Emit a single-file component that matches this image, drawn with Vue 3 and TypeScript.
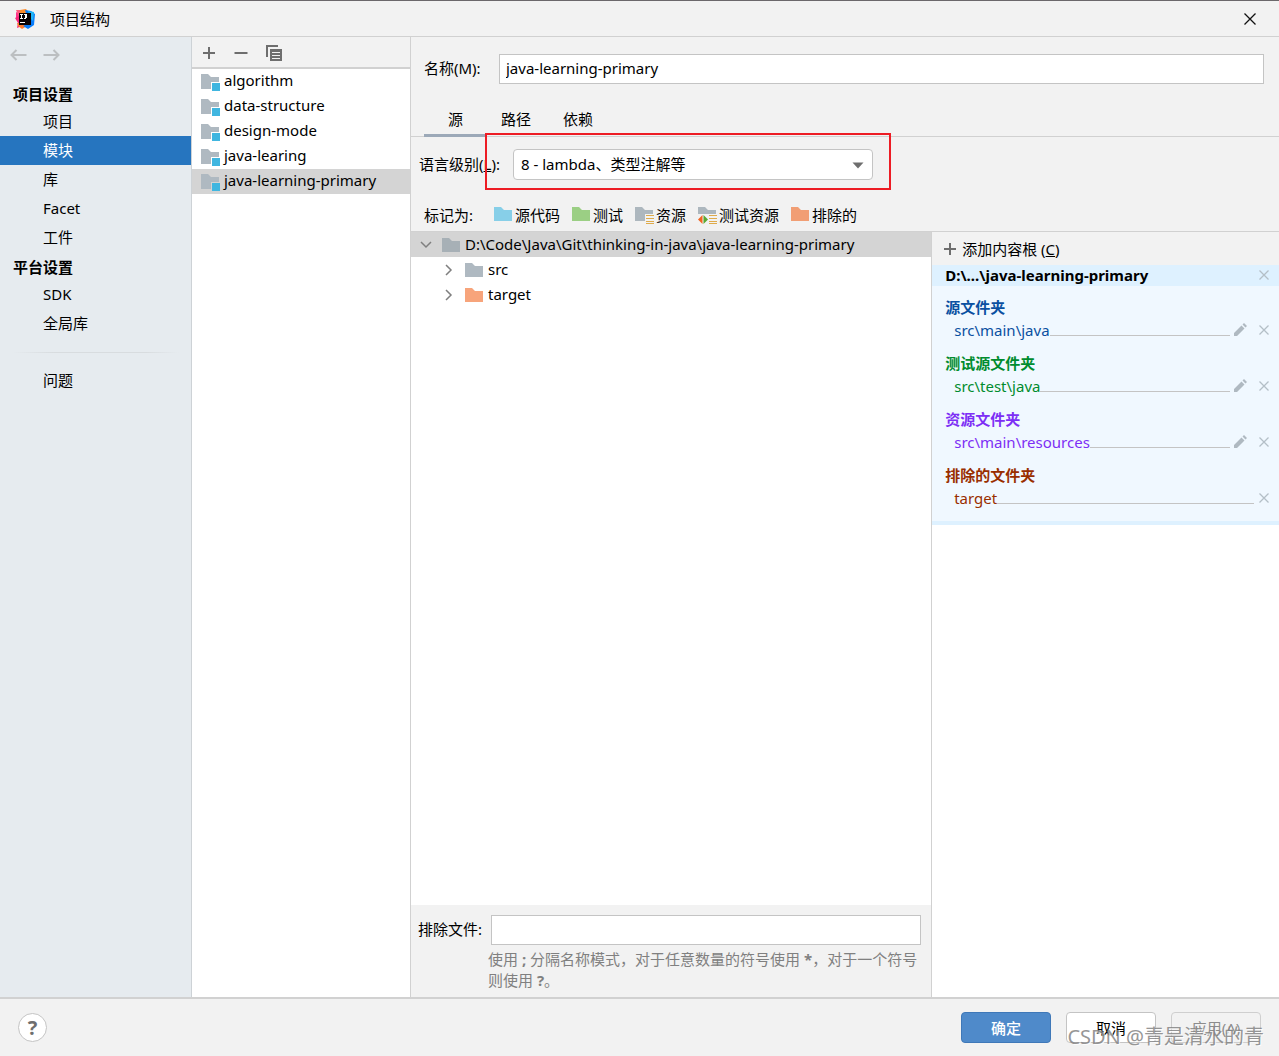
<script setup lang="ts">
import { ref } from 'vue'

interface FolderMark {
  label: string
  color: string
  badge: 'none' | 'lines' | 'test'
}

interface ContentFolder {
  title: string
  path: string
  tone: string
  editable: boolean
}

const projectItems = ['项目', '模块', '库', 'Facet', '工件']
const platformItems = ['SDK', '全局库']
const activeItem = ref('模块')

const modules = ['algorithm', 'data-structure', 'design-mode', 'java-learing', 'java-learning-primary']
const activeModule = ref('java-learning-primary')

const moduleName = ref('java-learning-primary')
const tabs = ['源', '路径', '依赖']
const activeTab = ref('源')
const level = ref('8')
const excludePattern = ref('')

const marks: FolderMark[] = [
  { label: '源代码', color: '#87cfe8', badge: 'none' },
  { label: '测试', color: '#9bcf84', badge: 'none' },
  { label: '资源', color: '#adb7be', badge: 'lines' },
  { label: '测试资源', color: '#adb7be', badge: 'test' },
  { label: '排除的', color: '#f19e74', badge: 'none' },
]

const children = [
  { name: 'src', color: '#afb9c1' },
  { name: 'target', color: '#f7a47b' },
]

const folders: ContentFolder[] = [
  { title: '源文件夹', path: 'src\\main\\java', tone: 'source', editable: true },
  { title: '测试源文件夹', path: 'src\\test\\java', tone: 'test', editable: true },
  { title: '资源文件夹', path: 'src\\main\\resources', tone: 'resource', editable: true },
  { title: '排除的文件夹', path: 'target', tone: 'excluded', editable: false },
]
</script>

<template>
  <div class="dialog">
    <header class="titlebar">
      <svg class="logo" width="20" height="20" viewBox="0 0 20 20" aria-hidden="true">
        <path d="M1 3 5 5 4 12 1 10Z" fill="#ff318c" />
        <path d="M1 1 8 1 9 5 4 8Z" fill="#fe5a7c" />
        <path d="M0 9 4 7 7 17 2 19 3 14Z" fill="#f9267b" />
        <path d="M5 1 11 0 14 4 5 5Z" fill="#fc8b2c" />
        <path d="M2 14 8 14 12 17 7 20 3 17Z" fill="#fc7b30" />
        <path d="M10 1 16 2 20 5 19 16 13 20 8 17 14 14Z" fill="#087cfa" />
        <path d="M13 2 19 3 18 12 15 9Z" fill="#1fb5f7" />
        <rect x="4" y="4" width="12" height="12" fill="#090205" />
        <path d="M5 5h3v1H7v3h1v1H5V9h1V6H5zM9 5h3v4h-1v1H9V9h1V6H9zM5 13h5v1H5z" fill="#fff" />
      </svg>
      <h1>项目结构</h1>
      <button class="close" aria-label="关闭">
        <svg width="14" height="14" viewBox="0 0 14 14"><path d="M1.500 1.500 12.500 12.500M12.500 1.500 1.500 12.500" stroke="#111" stroke-width="1.300" /></svg>
      </button>
    </header>

    <main class="body">
      <nav class="sidebar">
        <div class="history">
          <button aria-label="后退">
            <svg width="17" height="14" viewBox="0 0 17 14"><path d="M16.500 7H1.500M6.500 2 1.500 7l5 5" fill="none" stroke="#bcbfc1" stroke-width="2" /></svg>
          </button>
          <button aria-label="前进">
            <svg width="17" height="14" viewBox="0 0 17 14"><path d="M.5 7h15M10.500 2l5 5-5 5" fill="none" stroke="#bcbfc1" stroke-width="2" /></svg>
          </button>
        </div>
        <h2>项目设置</h2>
        <button v-for="item in projectItems" :key="item" class="nav-item" :class="{ active: item === activeItem }" @click="activeItem = item">{{ item }}</button>
        <h2>平台设置</h2>
        <button v-for="item in platformItems" :key="item" class="nav-item" :class="{ active: item === activeItem }" @click="activeItem = item">{{ item }}</button>
        <div class="divider"></div>
        <button class="nav-item" :class="{ active: activeItem === '问题' }" @click="activeItem = '问题'">问题</button>
      </nav>

      <section class="modules">
        <div class="toolbar">
          <button aria-label="添加"><svg width="14" height="14" viewBox="0 0 14 14"><path d="M7 1v12M1 7h12" stroke="#6e6e6e" stroke-width="2" /></svg></button>
          <button aria-label="移除"><svg width="14" height="14" viewBox="0 0 14 14"><path d="M.5 7h13" stroke="#6e6e6e" stroke-width="2" /></svg></button>
          <button aria-label="复制">
            <svg width="16" height="16" viewBox="0 0 16 16">
              <path d="M1 12V1h11" fill="none" stroke="#6e6e6e" stroke-width="2" />
              <path d="M4 4h12v12H4z" fill="#6e6e6e" />
              <path d="M6 7.500h8M6 10.500h8M6 13.500h8" stroke="#f2f2f2" />
            </svg>
          </button>
        </div>
        <ul>
          <li v-for="name in modules" :key="name">
            <button class="module" :class="{ selected: name === activeModule }" @click="activeModule = name">
              <svg width="20" height="18" viewBox="0 0 20 18">
                <path d="M0 0h7l3 3h8v12H0z" fill="#afb9c1" />
                <rect class="gap" x="10" y="8" width="10" height="10" />
                <rect x="11" y="9" width="8" height="8" fill="#40b6e0" />
              </svg>
              <span>{{ name }}</span>
            </button>
          </li>
        </ul>
      </section>

      <section class="editor">
        <div class="name-row">
          <label for="module-name">名称(M):</label>
          <input id="module-name" v-model="moduleName" type="text" />
        </div>

        <div class="tabs" role="tablist">
          <button v-for="tab in tabs" :key="tab" role="tab" :aria-selected="tab === activeTab" :class="{ current: tab === activeTab }" @click="activeTab = tab">{{ tab }}</button>
        </div>

        <div class="level-row">
          <label for="level">语言级别(<u>L</u>):</label>
          <div class="combo">
            <select id="level" v-model="level">
              <option value="8">8 - lambda、类型注解等</option>
            </select>
            <svg width="12" height="7" viewBox="0 0 12 7"><path d="M.5.500h11L6 6.500z" fill="#6e6e6e" /></svg>
          </div>
          <div class="highlight"></div>
        </div>

        <div class="marks">
          <span class="marks-label">标记为:</span>
          <button v-for="mark in marks" :key="mark.label">
            <svg width="20" height="18" viewBox="0 0 20 18">
              <path d="M0 1h7l3 3h8v11H0z" :fill="mark.color" />
              <template v-if="mark.badge !== 'none'">
                <path d="M10 8h10v10H10z" fill="#f2f2f2" />
                <path d="M11 9.500h8M11 12.500h8M11 15.500h8M11 17.500h8" stroke="#dfab4b" />
              </template>
              <template v-if="mark.badge === 'test'">
                <path d="M0 8h10v10H0z" fill="#f2f2f2" />
                <path d="M4.500 9v9L0 13.500z" fill="#f26522" />
                <path d="M5.500 9v9l4.500-4.500z" fill="#59a833" />
              </template>
            </svg>
            <span>{{ mark.label }}</span>
          </button>
        </div>

        <div class="split">
          <div class="tree-pane">
            <div class="tree" role="tree">
              <div class="node root" role="treeitem" aria-expanded="true">
                <svg width="12" height="8" viewBox="0 0 12 8"><path d="M1 1l5 5 5-5" fill="none" stroke="#7f7f7f" stroke-width="1.500" /></svg>
                <svg width="18" height="14" viewBox="0 0 18 14"><path d="M0 0h7l3 3h8v11H0z" fill="#a7b0b6" /></svg>
                <span>D:\Code\Java\Git\thinking-in-java\java-learning-primary</span>
              </div>
              <div v-for="child in children" :key="child.name" class="node child" role="treeitem" aria-expanded="false">
                <svg width="12" height="12" viewBox="0 0 12 12"><path d="M3 1l5 5-5 5" fill="none" stroke="#7f7f7f" stroke-width="1.500" /></svg>
                <svg width="18" height="14" viewBox="0 0 18 14"><path d="M0 0h7l3 3h8v11H0z" :fill="child.color" /></svg>
                <span>{{ child.name }}</span>
              </div>
            </div>
            <div class="exclude">
              <label for="exclude">排除文件:</label>
              <input id="exclude" v-model="excludePattern" type="text" />
              <p>使用 <b>;</b> 分隔名称模式，对于任意数量的符号使用 <b>*</b>，对于一个符号则使用 <b>?</b>。</p>
            </div>
          </div>

          <aside class="roots">
            <button class="add-root">
              <svg width="14" height="14" viewBox="0 0 14 14"><path d="M7 1v12M1 7h12" stroke="#6e6e6e" stroke-width="2" /></svg>
              <span>添加内容根 (<u>C</u>)</span>
            </button>
            <div class="root-head">
              <strong>D:\...\java-learning-primary</strong>
              <button aria-label="移除内容根"><svg width="10" height="10" viewBox="0 0 10 10"><path d="M.5.500l9 9M9.500.500l-9 9" stroke="#b4bfc7" stroke-width="1.300" /></svg></button>
            </div>
            <div class="folders">
              <div v-for="folder in folders" :key="folder.title" class="folder" :class="folder.tone">
                <h3>{{ folder.title }}</h3>
                <div class="path">
                  <span>{{ folder.path }}</span>
                  <i></i>
                  <button v-if="folder.editable" class="edit" aria-label="编辑">
                    <svg width="13" height="13" viewBox="0 0 13 13"><path d="M0 13v-3l7.500-7.500 3 3L3 13zM8.500 1.500 10 0l3 3-1.500 1.500z" fill="#afb9c1" /></svg>
                  </button>
                  <button aria-label="移除"><svg width="10" height="10" viewBox="0 0 10 10"><path d="M.5.500l9 9M9.500.500l-9 9" stroke="#b4bfc7" stroke-width="1.300" /></svg></button>
                </div>
              </div>
            </div>
          </aside>
        </div>
      </section>
    </main>

    <footer class="footer">
      <button class="help" aria-label="帮助">?</button>
      <div class="actions">
        <button class="primary">确定</button>
        <button>取消</button>
        <button disabled>应用(A)</button>
      </div>
      <span class="watermark">CSDN @青是清水的青</span>
    </footer>
  </div>
</template>

<style>
body {
  background: #f2f2f2;
}
</style>

<style scoped>
.dialog {
  display: flex;
  flex-direction: column;
  min-height: 100vh;
  box-sizing: border-box;
  border-top: 1px solid #6b686b;
  background: #f2f2f2;
  color: #000;
  font: 15px/20px "Noto Sans", "Noto Sans CJK SC", sans-serif;
}
.dialog * {
  box-sizing: border-box;
}
button {
  padding: 0;
  border: 0;
  background: none;
  color: inherit;
  font: inherit;
}
svg {
  display: block;
  flex: none;
}
h1,
h2,
h3,
p,
ul {
  margin: 0;
  padding: 0;
  font-size: inherit;
}
ul {
  list-style: none;
}
input {
  min-width: 0;
  height: 30px;
  padding: 0 6px 2px;
  border: 1px solid #c4c4c4;
  background: #fff;
  color: inherit;
  font: inherit;
}
label {
  padding-bottom: 2px;
}

.titlebar {
  display: flex;
  align-items: center;
  height: 36px;
  padding: 0 22px 0 15px;
  border-bottom: 1px solid #d1d1d1;
}
.titlebar h1 {
  flex: 1;
  margin-left: 15px;
  font-weight: 400;
}

.body {
  display: flex;
  flex: 1;
  border-bottom: 2px solid #d1d1d1;
}
.sidebar {
  width: 192px;
  flex: none;
  border-right: 1px solid #cdd2d6;
  background: #e6ebef;
}
.history {
  display: flex;
  gap: 16px;
  height: 41px;
  padding: 8px 10px;
}
.history button {
  height: 20px;
}
.sidebar h2 {
  height: 29px;
  padding: 6px 13px 0;
  line-height: 20px;
}
.sidebar .nav-item + h2 {
  height: 28px;
  padding-top: 5px;
}
.nav-item {
  display: block;
  width: 100%;
  height: 29px;
  padding: 0 0 2px 43px;
  text-align: left;
}
.nav-item.active {
  background: #2675bf;
  color: #fff;
}
.divider {
  height: 1px;
  margin: 14px 12px 13px;
  background: linear-gradient(90deg, transparent, #d8dcdf 25%, #d8dcdf 80%, transparent);
}

.modules {
  width: 219px;
  flex: none;
  border-right: 1px solid #d1d1d1;
  background: #fff;
}
.toolbar {
  display: flex;
  align-items: center;
  gap: 18px;
  height: 32px;
  padding: 2px 10px 0;
  border-bottom: 2px solid #d1d1d1;
  background: #f2f2f2;
}
.module {
  display: flex;
  align-items: flex-start;
  gap: 3px;
  width: 100%;
  height: 25px;
  padding: 1px 0 0 9px;
}
.module svg {
  margin-top: 4px;
}
.gap {
  fill: #fff;
}
.module.selected {
  background: #d4d4d4;
}
.module.selected .gap {
  fill: #d4d4d4;
}

.editor {
  display: flex;
  flex: 1;
  flex-direction: column;
  min-width: 0;
}
.name-row {
  display: flex;
  align-items: center;
  padding: 17px 15px 0 13px;
}
.name-row label {
  width: 75px;
}
.name-row input {
  flex: 1;
}
.tabs {
  display: flex;
  height: 53px;
  padding: 15px 13px 0;
  border-bottom: 1px solid #d1d1d1;
}
.tabs button {
  height: 38px;
  padding: 2px 16px 0;
}
.tabs button.current {
  padding: 5px 22px 0 24px;
  border-bottom: 3px solid #9ca9b8;
}
.level-row {
  position: relative;
  display: flex;
  align-items: center;
  height: 55px;
  padding-left: 8px;
}
.level-row label {
  width: 94px;
}
.combo {
  position: relative;
  width: 360px;
}
.combo select {
  display: block;
  width: 100%;
  height: 31px;
  padding: 0 30px 1px 7px;
  border: 1px solid #c4c4c4;
  border-radius: 4px;
  appearance: none;
  background: #fff;
  color: inherit;
  font: inherit;
}
.combo svg {
  position: absolute;
  top: 13px;
  right: 9px;
  pointer-events: none;
}
.highlight {
  position: absolute;
  top: -4px;
  left: 74px;
  width: 406px;
  height: 57px;
  border: 2px solid #ed1c24;
  pointer-events: none;
}
.marks {
  display: flex;
  align-items: center;
  gap: 12px;
  height: 40px;
  padding: 7px 13px 0;
  border-bottom: 1px solid #d1d1d1;
}
.marks-label {
  width: 58px;
}
.marks button {
  display: flex;
  align-items: center;
  gap: 1px;
}

.split {
  display: flex;
  flex: 1;
}
.tree-pane {
  display: flex;
  flex: 3;
  flex-direction: column;
  min-width: 0;
  border-right: 1px solid #d1d1d1;
}
.tree {
  flex: 1;
  background: #fff;
}
.node {
  display: flex;
  align-items: center;
  height: 25px;
  white-space: nowrap;
}
.node span {
  padding-bottom: 2px;
}
.root {
  gap: 5px;
  padding-left: 9px;
  background: #d4d4d4;
}
.root svg + svg {
  margin-left: 5px;
}
.child {
  gap: 5px;
  padding-left: 32px;
}
.child svg + svg {
  margin-left: 5px;
}
.exclude {
  display: grid;
  grid-template-columns: 73px 1fr;
  align-items: center;
  padding: 10px 10px 6px 7px;
}
.exclude p {
  grid-column: 2;
  margin-top: 4px;
  margin-left: -3px;
  color: #808080;
  line-height: 21px;
}

.roots {
  flex: 2;
  min-width: 0;
  background: #fff;
}
.add-root {
  display: flex;
  align-items: center;
  gap: 5px;
  width: 100%;
  height: 33px;
  padding-left: 11px;
  background: #f2f2f2;
}
.root-head {
  display: flex;
  align-items: center;
  justify-content: space-between;
  height: 21px;
  padding: 0 10px 1px 13px;
  background: #def1ff;
}
.folders {
  padding: 11px 10px 11px 13px;
  border-bottom: 4px solid #def1ff;
  background: #f0f8ff;
}
.folder {
  height: 56px;
}
.folder:last-child {
  height: 45px;
}
.folder h3 {
  height: 22px;
}
.path {
  display: flex;
  align-items: center;
  height: 21px;
  padding-left: 9px;
}
.path i {
  flex: 1;
  height: 1px;
  margin: 12px 5px 0 0;
  background: #c4c4c4;
}
.edit {
  margin: 0 12px 0 -1px;
}
.source {
  color: #0a50a1;
}
.test {
  color: #008c2e;
}
.resource {
  color: #7d2ff5;
}
.excluded {
  color: #992e00;
}

.footer {
  position: relative;
  display: flex;
  align-items: center;
  justify-content: space-between;
  height: 57px;
  padding: 0 18px;
}
.help {
  width: 29px;
  height: 29px;
  border: 1px solid #c4c4c4;
  border-radius: 50%;
  background: #fff;
  color: #6e6e6e;
  font-size: 20px;
  font-weight: 700;
  line-height: 27px;
}
.actions {
  display: flex;
  gap: 15px;
}
.actions button {
  width: 90px;
  height: 31px;
  border: 1px solid #c4c4c4;
  border-radius: 4px;
  background: #fff;
}
.actions .primary {
  border-color: #3f78b8;
  background: #4f8aca;
  color: #fff;
  font-weight: 500;
}
.actions button:disabled {
  border-color: #cfcfcf;
  background: #f2f2f2;
  color: #8c8c8c;
}
.watermark {
  position: absolute;
  right: 15px;
  bottom: 6px;
  color: #858585;
  font-size: 20px;
  line-height: 26px;
  opacity: 0.85;
  text-shadow: 1px 1px #fff;
  pointer-events: none;
}
</style>
